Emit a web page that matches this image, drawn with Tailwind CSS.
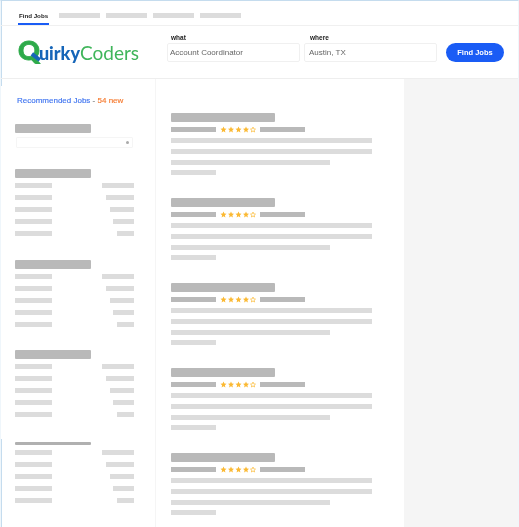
<!DOCTYPE html>
<html lang="en">
<head>
<meta charset="UTF-8">
<title>Find Jobs | QuirkyCoders</title>
<script src="https://cdn.jsdelivr.net/npm/@tailwindcss/browser@4"></script>
</head>
<body class="bg-white font-['Liberation_Sans',Arial,sans-serif]">
<svg class="hidden">
  <symbol id="stars" viewBox="0 0 36 7">
    <polygon fill="#fbb933" points="3.5,0.6 4.4,2.6 6.5,2.8 4.9,4.2 5.4,6.4 3.5,5.2 1.6,6.4 2.1,4.2 0.5,2.8 2.6,2.6"/>
    <polygon fill="#fbb933" points="11,0.6 11.9,2.6 14,2.8 12.4,4.2 12.9,6.4 11,5.2 9.1,6.4 9.6,4.2 8,2.8 10.1,2.6"/>
    <polygon fill="#fbb933" points="18.5,0.6 19.4,2.6 21.5,2.8 19.9,4.2 20.4,6.4 18.5,5.2 16.6,6.4 17.1,4.2 15.5,2.8 17.6,2.6"/>
    <polygon fill="#fbb933" points="26,0.6 26.9,2.6 29,2.8 27.4,4.2 27.9,6.4 26,5.2 24.1,6.4 24.6,4.2 23,2.8 25.1,2.6"/>
    <polygon fill="none" stroke="#fbb933" stroke-width="0.7" points="33,1 33.8,2.9 35.5,3.1 34.2,4.3 34.6,6 33,5 31.4,6 31.8,4.3 30.5,3.1 32.2,2.9"/>
  </symbol>
</svg>

<div class="relative h-[527px] w-[519px] overflow-hidden border-t border-l border-r border-t-[#c5dcee] border-l-[#eff6fb] border-r-[#eff6fb] bg-white">
  <div class="absolute -left-px top-0 h-[85px] w-[1.5px] bg-[#c5dcee]"></div>
  <div class="absolute -left-px top-[438px] bottom-0 w-[1.5px] bg-[#c5dcee]"></div>
  <div class="absolute -right-px top-0 h-[85px] w-px bg-[#c5dcee]"></div>
  <div class="absolute -right-px top-[440px] bottom-0 w-px bg-[#c5dcee]"></div>

  <div class="blur-[0.4px]">
  <!-- tabs -->
  <nav class="flex h-[25px] items-start gap-[6px] border-b border-[#f0f0f0] pl-[17px]">
    <div class="mr-[4px] h-[24px] w-[31px] border-b-2 border-[#1a5cf5] pt-[10px] text-center text-[6.2px] leading-[9px] font-bold whitespace-nowrap text-[#222]">Find Jobs</div>
    <div class="mt-[12px] h-[5px] w-[41px] bg-[#dcdcdc]"></div>
    <div class="mt-[12px] h-[5px] w-[41px] bg-[#dcdcdc]"></div>
    <div class="mt-[12px] h-[5px] w-[41px] bg-[#dcdcdc]"></div>
    <div class="mt-[12px] h-[5px] w-[41px] bg-[#dcdcdc]"></div>
  </nav>

  <!-- search header -->
  <header class="flex h-[53px] items-start border-b border-[#eeeeee] pl-[17px]">
    <div class="relative mt-[9px] flex h-[30px] w-[149px] items-baseline font-['Lato',sans-serif] leading-[30px] whitespace-nowrap">
      <span class="text-[27px] font-black text-[#2eaa4a] [-webkit-text-stroke:0.8px_#2eaa4a]">Q</span><span class="-ml-[1px] text-[18px] font-black text-[#1565b8]">uirky</span><span class="text-[19px] text-[#3fb55a]">Coders</span>
      <div class="absolute left-[13px] top-[20px] h-[3.5px] w-[10px] rotate-[38deg] bg-[#1565b8]"></div>
    </div>
    <div class="w-[137px]">
      <div class="mt-[7px] ml-[4px] h-[9px] text-[6.5px] leading-[9px] font-bold text-[#222]">what</div>
      <div class="mt-[1px] flex h-[19px] w-[133px] items-center rounded-[2px] border border-[#f0f0f0] pl-[2px] text-[8px] text-[#666]">Account Coordinator</div>
    </div>
    <div class="w-[142px]">
      <div class="mt-[7px] ml-[6px] h-[9px] text-[6.5px] leading-[9px] font-bold text-[#222]">where</div>
      <div class="mt-[1px] flex h-[19px] w-[133px] items-center rounded-[2px] border border-[#f0f0f0] pl-[4px] text-[8px] text-[#666]">Austin, TX</div>
    </div>
    <button class="mt-[17px] h-[19px] w-[58px] rounded-full bg-[#1a5cf5] text-[7.5px] font-bold text-white">Find Jobs</button>
  </header>

  <div class="flex">
    <!-- filters -->
    <aside class="w-[155px] border-r border-[#f5f5f5] pt-[17px] pl-[14px] pr-[21px]">
      <div class="ml-[2px] text-[8px] leading-[9px] whitespace-nowrap [-webkit-text-stroke:0.15px]"><span class="text-[#3f74f0]">Recommended Jobs</span> <span class="text-[#666]">-</span> <span class="text-[#f5782c]">54 new</span></div>

      <div class="mt-[19px] h-[9px] w-[76px] rounded-[1px] bg-[#b9b9b9]"></div>
      <div class="mt-[4px] ml-[1px] flex h-[11px] w-[117px] items-center justify-end rounded-[1px] border border-[#f5f5f5] pr-[3px]">
        <div class="size-[3px] rounded-full bg-[#aaa]"></div>
      </div>

      <div class="mt-[21px] h-[9px] w-[76px] rounded-[1px] bg-[#b9b9b9]"></div>
      <div class="mt-[5px] flex flex-col gap-[7px]">
        <div class="flex justify-between"><div class="h-[5px] w-[37px] bg-[#dcdcdc]"></div><div class="h-[5px] w-[32px] bg-[#dcdcdc]"></div></div>
        <div class="flex justify-between"><div class="h-[5px] w-[37px] bg-[#dcdcdc]"></div><div class="h-[5px] w-[28px] bg-[#dcdcdc]"></div></div>
        <div class="flex justify-between"><div class="h-[5px] w-[37px] bg-[#dcdcdc]"></div><div class="h-[5px] w-[24px] bg-[#dcdcdc]"></div></div>
        <div class="flex justify-between"><div class="h-[5px] w-[37px] bg-[#dcdcdc]"></div><div class="h-[5px] w-[21px] bg-[#dcdcdc]"></div></div>
        <div class="flex justify-between"><div class="h-[5px] w-[37px] bg-[#dcdcdc]"></div><div class="h-[5px] w-[17px] bg-[#dcdcdc]"></div></div>
      </div>

      <div class="mt-[24px] h-[9px] w-[76px] rounded-[1px] bg-[#b9b9b9]"></div>
      <div class="mt-[5px] flex flex-col gap-[7px]">
        <div class="flex justify-between"><div class="h-[5px] w-[37px] bg-[#dcdcdc]"></div><div class="h-[5px] w-[32px] bg-[#dcdcdc]"></div></div>
        <div class="flex justify-between"><div class="h-[5px] w-[37px] bg-[#dcdcdc]"></div><div class="h-[5px] w-[28px] bg-[#dcdcdc]"></div></div>
        <div class="flex justify-between"><div class="h-[5px] w-[37px] bg-[#dcdcdc]"></div><div class="h-[5px] w-[24px] bg-[#dcdcdc]"></div></div>
        <div class="flex justify-between"><div class="h-[5px] w-[37px] bg-[#dcdcdc]"></div><div class="h-[5px] w-[21px] bg-[#dcdcdc]"></div></div>
        <div class="flex justify-between"><div class="h-[5px] w-[37px] bg-[#dcdcdc]"></div><div class="h-[5px] w-[17px] bg-[#dcdcdc]"></div></div>
      </div>

      <div class="mt-[23px] h-[9px] w-[76px] rounded-[1px] bg-[#b9b9b9]"></div>
      <div class="mt-[5px] flex flex-col gap-[7px]">
        <div class="flex justify-between"><div class="h-[5px] w-[37px] bg-[#dcdcdc]"></div><div class="h-[5px] w-[32px] bg-[#dcdcdc]"></div></div>
        <div class="flex justify-between"><div class="h-[5px] w-[37px] bg-[#dcdcdc]"></div><div class="h-[5px] w-[28px] bg-[#dcdcdc]"></div></div>
        <div class="flex justify-between"><div class="h-[5px] w-[37px] bg-[#dcdcdc]"></div><div class="h-[5px] w-[24px] bg-[#dcdcdc]"></div></div>
        <div class="flex justify-between"><div class="h-[5px] w-[37px] bg-[#dcdcdc]"></div><div class="h-[5px] w-[21px] bg-[#dcdcdc]"></div></div>
        <div class="flex justify-between"><div class="h-[5px] w-[37px] bg-[#dcdcdc]"></div><div class="h-[5px] w-[17px] bg-[#dcdcdc]"></div></div>
      </div>

      <div class="mt-[25px] h-[3px] w-[76px] rounded-[1px] bg-[#b0b0b0]"></div>
      <div class="mt-[5px] flex flex-col gap-[7px]">
        <div class="flex justify-between"><div class="h-[5px] w-[37px] bg-[#dcdcdc]"></div><div class="h-[5px] w-[32px] bg-[#dcdcdc]"></div></div>
        <div class="flex justify-between"><div class="h-[5px] w-[37px] bg-[#dcdcdc]"></div><div class="h-[5px] w-[28px] bg-[#dcdcdc]"></div></div>
        <div class="flex justify-between"><div class="h-[5px] w-[37px] bg-[#dcdcdc]"></div><div class="h-[5px] w-[24px] bg-[#dcdcdc]"></div></div>
        <div class="flex justify-between"><div class="h-[5px] w-[37px] bg-[#dcdcdc]"></div><div class="h-[5px] w-[21px] bg-[#dcdcdc]"></div></div>
        <div class="flex justify-between"><div class="h-[5px] w-[37px] bg-[#dcdcdc]"></div><div class="h-[5px] w-[17px] bg-[#dcdcdc]"></div></div>
      </div>
    </aside>

    <!-- job list, rows repeat every 85px -->
    <main class="w-[248px] pt-[34px] pl-[15px]">
      <section class="h-[85px]">
        <div class="h-[9px] w-[104px] rounded-[1px] bg-[#b9b9b9]"></div>
        <div class="mt-[5px] flex h-[5px] items-center">
          <div class="h-[5px] w-[45px] bg-[#b9b9b9]"></div>
          <svg class="ml-[4px] h-[7px] w-[36px]"><use href="#stars"/></svg>
          <div class="ml-[4px] h-[5px] w-[45px] bg-[#b9b9b9]"></div>
        </div>
        <div class="mt-[6px] h-[5px] w-[201px] bg-[#dcdcdc]"></div>
        <div class="mt-[6px] h-[5px] w-[201px] bg-[#dcdcdc]"></div>
        <div class="mt-[6px] h-[5px] w-[159px] bg-[#dcdcdc]"></div>
        <div class="mt-[5px] h-[5px] w-[45px] bg-[#dcdcdc]"></div>
      </section>
      <section class="h-[85px]">
        <div class="h-[9px] w-[104px] rounded-[1px] bg-[#b9b9b9]"></div>
        <div class="mt-[5px] flex h-[5px] items-center">
          <div class="h-[5px] w-[45px] bg-[#b9b9b9]"></div>
          <svg class="ml-[4px] h-[7px] w-[36px]"><use href="#stars"/></svg>
          <div class="ml-[4px] h-[5px] w-[45px] bg-[#b9b9b9]"></div>
        </div>
        <div class="mt-[6px] h-[5px] w-[201px] bg-[#dcdcdc]"></div>
        <div class="mt-[6px] h-[5px] w-[201px] bg-[#dcdcdc]"></div>
        <div class="mt-[6px] h-[5px] w-[159px] bg-[#dcdcdc]"></div>
        <div class="mt-[5px] h-[5px] w-[45px] bg-[#dcdcdc]"></div>
      </section>
      <section class="h-[85px]">
        <div class="h-[9px] w-[104px] rounded-[1px] bg-[#b9b9b9]"></div>
        <div class="mt-[5px] flex h-[5px] items-center">
          <div class="h-[5px] w-[45px] bg-[#b9b9b9]"></div>
          <svg class="ml-[4px] h-[7px] w-[36px]"><use href="#stars"/></svg>
          <div class="ml-[4px] h-[5px] w-[45px] bg-[#b9b9b9]"></div>
        </div>
        <div class="mt-[6px] h-[5px] w-[201px] bg-[#dcdcdc]"></div>
        <div class="mt-[6px] h-[5px] w-[201px] bg-[#dcdcdc]"></div>
        <div class="mt-[6px] h-[5px] w-[159px] bg-[#dcdcdc]"></div>
        <div class="mt-[5px] h-[5px] w-[45px] bg-[#dcdcdc]"></div>
      </section>
      <section class="h-[85px]">
        <div class="h-[9px] w-[104px] rounded-[1px] bg-[#b9b9b9]"></div>
        <div class="mt-[5px] flex h-[5px] items-center">
          <div class="h-[5px] w-[45px] bg-[#b9b9b9]"></div>
          <svg class="ml-[4px] h-[7px] w-[36px]"><use href="#stars"/></svg>
          <div class="ml-[4px] h-[5px] w-[45px] bg-[#b9b9b9]"></div>
        </div>
        <div class="mt-[6px] h-[5px] w-[201px] bg-[#dcdcdc]"></div>
        <div class="mt-[6px] h-[5px] w-[201px] bg-[#dcdcdc]"></div>
        <div class="mt-[6px] h-[5px] w-[159px] bg-[#dcdcdc]"></div>
        <div class="mt-[5px] h-[5px] w-[45px] bg-[#dcdcdc]"></div>
      </section>
      <section class="h-[85px]">
        <div class="h-[9px] w-[104px] rounded-[1px] bg-[#b9b9b9]"></div>
        <div class="mt-[5px] flex h-[5px] items-center">
          <div class="h-[5px] w-[45px] bg-[#b9b9b9]"></div>
          <svg class="ml-[4px] h-[7px] w-[36px]"><use href="#stars"/></svg>
          <div class="ml-[4px] h-[5px] w-[45px] bg-[#b9b9b9]"></div>
        </div>
        <div class="mt-[6px] h-[5px] w-[201px] bg-[#dcdcdc]"></div>
        <div class="mt-[6px] h-[5px] w-[201px] bg-[#dcdcdc]"></div>
        <div class="mt-[6px] h-[5px] w-[159px] bg-[#dcdcdc]"></div>
        <div class="mt-[5px] h-[5px] w-[45px] bg-[#dcdcdc]"></div>
      </section>
    </main>

    <div class="h-[460px] flex-1 bg-[#f5f5f5]"></div>
  </div>
  </div>
</div>
</body>
</html>
